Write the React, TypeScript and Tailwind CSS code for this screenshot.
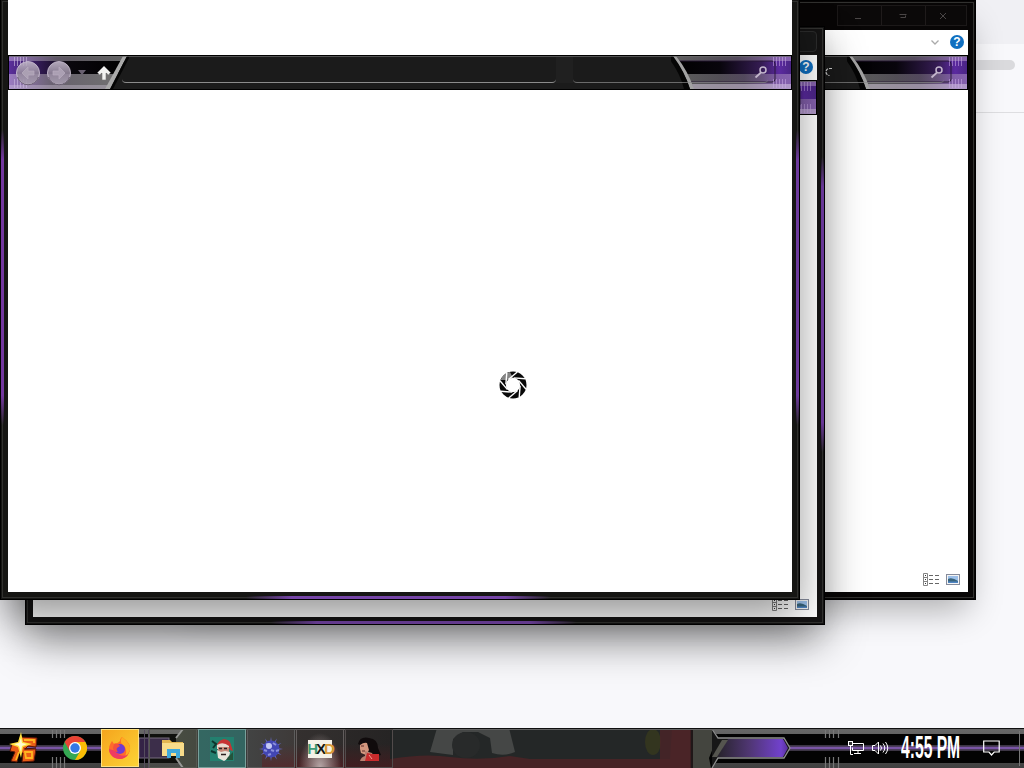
import React from "react";
import clsx from "clsx";

const HelpIcon = () => (
  <div className="mb-px flex size-3.5 shrink-0 items-center justify-center rounded-full bg-[#0f6fc0] font-['Liberation_Sans'] text-[12px] font-bold leading-none text-white">
    ?
  </div>
);

const NavButton = ({ flip = false }: { flip?: boolean }) => (
  <svg viewBox="0 0 26 26" className={clsx("size-[26px]", flip && "-scale-x-100")}>
    <defs>
      <linearGradient id="orb" x1="0" y1="0" x2="0" y2="1">
        <stop offset="0" stopColor="#c4bacb" />
        <stop offset="0.5" stopColor="#94889d" />
        <stop offset="1" stopColor="#a99fb2" />
      </linearGradient>
    </defs>
    <circle cx="13" cy="13" r="11.5" fill="url(#orb)" opacity="0.9" stroke="#cfc4d6" />
    <path d="M2.500 17a11 11 0 0 0 21 0" fill="none" stroke="#4b4054" opacity="0.7" />
    <path d="M13 7l-6 6 6 6v-4h6v-4h-6z" fill="#aba0b3" stroke="#b9aec0" strokeWidth="0.700" />
  </svg>
);

const ticks = [0, 3, 6, 9, 12];

// Left end of the navigation bar: purple glass cut by a silver slash
const BarLeft = () => (
  <svg viewBox="0 0 120 33" className="absolute left-0 top-0 h-[33px] w-[120px]">
    <defs>
      <linearGradient id="glassL" x1="0" x2="1">
        <stop offset="0" stopColor="#5b2f9c" />
        <stop offset="0.2" stopColor="#3a1f62" />
        <stop offset="0.5" stopColor="#0a070d" />
        <stop offset="1" stopColor="#000" />
      </linearGradient>
      <linearGradient id="shineL" x1="0" x2="1">
        <stop offset="0" stopColor="#a688c8" />
        <stop offset="0.4" stopColor="#77707c" />
        <stop offset="1" stopColor="#858585" />
      </linearGradient>
    </defs>
    <path d="M0 0H118L101 33H0z" fill="url(#glassL)" />
    <path d="M0 0H118L116 5H0z" fill="url(#shineL)" opacity="0.75" />
    <path d="M0 18H109L101 33H0z" fill="url(#shineL)" opacity="0.85" />
    <path d="M0 29H103L101 33H0z" fill="#ddd2e5" opacity="0.35" />
    {ticks.map((t) => (
      <path key={t} d={`M${5.5 + t} 1V10M${5.5 + t} 23V32`} stroke="#c9b6df" opacity="0.65" />
    ))}
    <path d="M114 0h4L101 33h-5z" fill="#aaa" />
    <path d="M118 0h3L104 33h-3z" fill="#050505" />
  </svg>
);

const BarRight = () => (
  <svg viewBox="0 0 120 33" className="absolute right-0 top-0 h-[33px] w-[120px]">
    <defs>
      <linearGradient id="glassR" x1="0" x2="1">
        <stop offset="0" stopColor="#000" />
        <stop offset="0.4" stopColor="#08050c" />
        <stop offset="0.75" stopColor="#351c53" />
        <stop offset="0.9" stopColor="#5b2aa0" />
        <stop offset="1" stopColor="#4a2584" />
      </linearGradient>
      <linearGradient id="shineR" x1="0" x2="1">
        <stop offset="0" stopColor="#898989" />
        <stop offset="0.55" stopColor="#6d6573" />
        <stop offset="1" stopColor="#a481c4" />
      </linearGradient>
    </defs>
    <path d="M2 0H120V33H22Q15 15 2 0z" fill="url(#glassR)" />
    <path d="M2 0H120V5H6z" fill="url(#shineR)" opacity="0.7" />
    <path d="M16 18H120V33H22z" fill="url(#shineR)" opacity="0.65" />
    <path d="M21 28H120V33H22z" fill="#ddd2e5" opacity="0.5" />
    <path d="M8 5H101q3 0 3 3V23q0 3-3 3H20" fill="none" stroke="#261633" opacity="0.9" />
    {ticks.map((t) => (
      <path key={t} d={`M${102.5 + t} 1V10M${102.5 + t} 23V32`} stroke="#c9a9e6" opacity="0.55" />
    ))}
    <path d="M1 0h4Q17 15 23 33h-4Q13 15 1 0z" fill="#a2a2a2" />
    <path d="M-4 0h6Q14 16 19 33h-6Q9 16-4 0z" fill="#050505" />
  </svg>
);

const SearchIcon = () => (
  <svg viewBox="0 0 14 14" className="size-3.5">
    <circle cx="9" cy="5" r="3" fill="none" stroke="#c3b6cc" strokeWidth="1.5" />
    <path d="M7 7.500L1.500 12.500" stroke="#c3b6cc" strokeWidth="1.8" />
  </svg>
);

const NavBar = ({ refresh = false }: { refresh?: boolean }) => (
  <div className="relative h-[35px] shrink-0 border border-black bg-[#1b1b1b]">
    <BarLeft />
    <BarRight />
    <div className="relative flex h-full items-center border-t border-[#6b6b6b]/70 pb-px pl-1.5 pr-[23px]">
      <NavButton />
      <div className="ml-[5px]">
        <NavButton flip />
      </div>
      <svg viewBox="0 0 8 5" className="ml-1.5 h-[5px] w-2">
        <path d="M0 0h8L4 5z" fill="#696070" />
      </svg>
      <svg viewBox="0 0 16 16" className="ml-2.5 size-4">
        <path d="M8 1L14.500 7.500 12.500 10 10 8V15H6V8L3.500 10 1.500 7.500z" fill="#f2f2f2" stroke="#777" strokeWidth="0.6" />
      </svg>
      <div className="ml-2.5 h-[26px] w-[434px] shrink-0 self-start rounded-b border-b border-[#8b8b8b]" />
      <div className="h-[26px] w-[17px] shrink-0 self-start bg-[#202020]" />
      <div className="flex h-[26px] flex-1 items-center self-start rounded-b border-b border-[#8b8b8b]/70 pt-[5px]">
        {refresh && (
          <svg viewBox="0 0 12 12" className="ml-[73px] size-3">
            <path d="M10 2.500H7.500a3.500 3.500 0 1 0 0 7" fill="none" stroke="#d8d8d8" strokeWidth="1.2" strokeDasharray="3 1" />
          </svg>
        )}
        <div className="ml-auto">
          <SearchIcon />
        </div>
      </div>
    </div>
  </div>
);

// View switcher in the lower right corner
const StatusIcons = () => (
  <div className="mt-auto flex items-center justify-end gap-[7px] pb-1.5 pr-2">
    <svg viewBox="0 0 16 13" className="h-[13px] w-4" fill="none">
      <path d="M.5.5h4v12h-4zM.5 4.500h4M.5 8.500h4" stroke="#858585" />
      <path d="M2 2.500h1M2 6.500h1M2 10.500h1" stroke="#333" />
      <path d="M6 2.500h4M12 2.500h4M6 6.500h4M12 6.500h4M6 10.500h4M12 10.500h4" stroke="#666" />
    </svg>
    <svg viewBox="0 0 14 11" className="h-[11px] w-3.5">
      <rect x=".5" y=".5" width="13" height="10" fill="#f4f4f4" stroke="#858b9b" />
      <rect x="2" y="2" width="10" height="7" fill="#9cc0ea" />
      <path d="M2 5q4-2 10 2v1H2z" fill="#38637a" />
      <path d="M2 7.500h10V9H2z" fill="#4f85c4" />
    </svg>
  </div>
);

const CaptionButtons = () => (
  <div className="mr-px flex h-[21px] w-[130px] border border-[#1c1919] bg-[#0b0909] text-[#4a4646]">
    <div className="flex flex-1 items-center justify-center border-r border-[#1f1b1b]">
      <svg viewBox="0 0 8 8" className="mr-1 size-2" stroke="currentColor">
        <path d="M1 6.500h6" />
      </svg>
    </div>
    <div className="flex flex-1 items-center justify-center border-r border-[#1f1b1b]">
      <svg viewBox="0 0 8 8" className="mr-0.5 size-2" stroke="currentColor" fill="none">
        <path d="M.5 2.500h7M1.500 5.500h5v-2" />
      </svg>
    </div>
    <div className="flex w-10 items-center justify-center">
      <svg viewBox="0 0 8 8" className="mr-1.5 size-2" stroke="currentColor">
        <path d="M1 1l6 6M7 1L1 7" />
      </svg>
    </div>
  </div>
);

type WindowProps = {
  className: string;
  glow?: boolean;
  children: React.ReactNode;
};

const Window = ({ className, glow = true, children }: WindowProps) => (
  <div className={clsx("absolute isolate w-[800px] border border-black px-[7px] pb-[7px]", className)}>
    <div className="pointer-events-none absolute inset-px border border-[#31312f]" />
    {glow && (
      <>
        <div className="absolute left-0 top-[130px] h-[295px] w-[3px] bg-[linear-gradient(to_bottom,transparent,#73379f_10%,#73379f_90%,transparent)]" />
        <div className="absolute right-0 top-[130px] h-[295px] w-[3px] bg-[linear-gradient(to_bottom,transparent,#6d3a9e_10%,#6d3a9e_90%,transparent)]" />
        <div className="absolute bottom-0 left-[245px] h-[3px] w-[305px] bg-[linear-gradient(to_right,transparent,#7645a8_15%,#7645a8_85%,transparent)]" />
      </>
    )}
    <div className="relative flex h-full flex-col">{children}</div>
  </div>
);

const Shutter = () => (
  <svg viewBox="-14 -14 28 28" className="absolute left-[499px] top-[371px] size-7">
    <circle r="10.2" fill="none" stroke="#090909" strokeWidth="6.6" />
    <path d="M-12.500-5A13.500 13.500 0 0 1-3-13L0-7-6-5z" fill="#858585" />
    {[0, 45, 90, 135, 180, 225, 270, 315].map((a) => (
      <path key={a} d="M-3-6.500L7.500-11.500" stroke="#fff" strokeWidth="1.4" transform={`rotate(${a + 75})`} />
    ))}
    <circle r="7" fill="#fff" />
  </svg>
);

// Glass, rails and blurred wallpaper behind the taskbar items
const TaskbarBackdrop = () => (
  <svg viewBox="0 0 1024 40" className="absolute inset-0 h-10 w-full">
    <defs>
      <linearGradient id="rail" x1="0" y1="0" x2="0" y2="1">
        <stop offset="0" stopColor="#686868" />
        <stop offset="1" stopColor="#404040" />
      </linearGradient>
      <linearGradient id="pill" x1="0" x2="1">
        <stop offset="0" stopColor="#26232a" />
        <stop offset="0.45" stopColor="#4f3672" />
        <stop offset="0.9" stopColor="#7141cc" />
        <stop offset="1" stopColor="#57309c" />
      </linearGradient>
      <linearGradient id="tiles" x1="0" x2="1">
        <stop offset="0" stopColor="#41443c" />
        <stop offset="0.3" stopColor="#393b3b" />
        <stop offset="0.55" stopColor="#34302f" />
        <stop offset="1" stopColor="#2b2929" />
      </linearGradient>
      <linearGradient id="wine" x1="0" y1="0" x2="0" y2="1">
        <stop offset="0.4" stopColor="#4a2023" stopOpacity="0" />
        <stop offset="1" stopColor="#4a2023" />
      </linearGradient>
    </defs>
    <rect width="1024" height="40" fill="#030303" />
    <path d="M0 1H183L179 6H0zM0 35H179L183 40H0z" fill="url(#rail)" />
    <path d="M712 1H1024V6H716zM716 35H1024V40H712z" fill="url(#rail)" />
    <path d="M0 17h180v6H0zM788 17h236v6H788z" fill="#3c3544" />
    <path d="M0 20h180M788 20h236" stroke="#7955a5" strokeWidth="2.5" />
    {[52.5, 56.5, 60.5, 64.5, 825.5, 829.5, 833.5, 838.5].map((x) => (
      <path key={x} d={`M${x} 0V10M${x} 29V40`} stroke="#777" strokeWidth="1.2" />
    ))}
    <rect x="139" y="10" width="30" height="20" fill="#342346" stroke="#746a7e" />
    <path d="M144.500 0V40M148.500 0V40" stroke="#554d5d" />
    <path d="M183 0L176 10V30L183 40H390V0z" fill="url(#tiles)" />
    <path d="M183 1L176 10M176 30L183 40" stroke="#999" strokeWidth="2" />
    <path d="M262 0H390V40H262z" fill="url(#wine)" />
    <rect x="390" width="300" height="40" fill="#242727" />
    <path d="M390 31Q425 25 450 29Q480 33 510 28L530 31H670L672 0H690V40H390z" fill="#462426" />
    <path d="M437 0H509L515 24Q504 29 492 25L490 10 478 4H463L453 11V27L430 24z" fill="#454746" />
    <ellipse cx="466" cy="17" rx="14" ry="13" fill="#282a2a" />
    <ellipse cx="653" cy="14" rx="8" ry="13" fill="#33351f" />
    <path d="M660 0H692V40H660z" fill="#4b2428" opacity="0.8" />
    <path d="M692 0H711L717 10 709 30 711 40H692z" fill="#44453f" />
    <path d="M692 0v40" stroke="#201718" strokeWidth="2" />
    <path d="M712 1L718 10H784L790 20 784 30H718L712 40" fill="#171717" stroke="#8e8e8e" strokeWidth="1.3" />
    <path d="M728 11H783L788 20 783 29H717z" fill="url(#pill)" />
    <path d="M717 29L728 12 722 12 712 29z" fill="#55554f" />
    <path d="M0 .5H1024" stroke="#101010" />
    <path d="M0 1.500H1024" stroke="#646464" />
    <path d="M1019.500 3V38" stroke="#777" />
  </svg>
);

const StartIcon = () => (
  <svg viewBox="0 0 30 32" className="h-8 w-[30px]">
    <path
      d="M11 5l17 1-1 9-8-1-3 3 11 0-2 12-12 1 1-9-4 0-2 9-6-1 4-9-5-1 2-7 7-1z"
      fill="#e95d16"
      stroke="#5b1507"
    />
    <path d="M15 8h10v3M16 20h7v6h-6zM10 20l-3 8" fill="none" stroke="#ffb620" strokeWidth="1.8" />
    <path d="M15 17l12-1" stroke="#481207" strokeWidth="1.2" />
    <path d="M12 0l2 10 9 2-9 3-2 11-3-11-9-3 9-2z" fill="#ffe23f" />
    <path d="M12 6l1 5 5 1-5 2-1 6-2-6-5-2 5-1z" fill="#fffbd0" />
  </svg>
);

const ChromeIcon = () => (
  <svg viewBox="-12 -12 24 24" className="size-6">
    <circle r="12" fill="#35a853" />
    <path d="M-10.400-6A12 12 0 0 1 10.400-6H0L-5.200 3z" fill="#ea4335" />
    <path d="M10.400-6A12 12 0 0 1 0 12L5.200 3 0-6z" fill="#fbbc05" />
    <circle r="6" fill="#fff" />
    <circle r="4.7" fill="#3478e5" />
  </svg>
);

const FirefoxIcon = () => (
  <svg viewBox="0 0 24 24" className="size-6">
    <path d="M14 1c4 3 9 7 8 13-1 5-5 9-10 9S1 19 1 13c0-4 2-6 3-8l2 3c3-1 4-1 6-3 0-2 1-3 2-4z" fill="#ff6a2b" />
    <path d="M14 1c5 4 9 8 8 13-1 3-3 5-5 6 3-5 0-10-3-12-2-2-1-5 0-7z" fill="#ffad21" />
    <path d="M1 13c0 6 5 10 11 10 3 0 6-2 8-4-5 2-10 0-12-4z" fill="#ef3b61" />
    <circle cx="12" cy="13" r="5" fill="#713bd1" />
    <path d="M6 8c2-1 5 0 6 2l-3 2c-1 1 0 3 1 4-3 0-5-2-5-4z" fill="#f4503e" />
  </svg>
);

const FolderIcon = () => (
  <svg viewBox="0 0 24 22" className="h-[22px] w-6">
    <path d="M1 2h8l2 2h11v14H1z" fill="#e3b752" />
    <path d="M1 5h22v13H1z" fill="#f8dc8a" />
    <path d="M6 11h13v9h-4v-5h-5v5H6z" fill="#40a9dc" />
  </svg>
);

const SantaIcon = () => (
  <svg viewBox="0 0 24 24" className="size-6">
    <rect width="24" height="24" fill="#23806f" />
    <path d="M2 4l4 3-3 4M1 14l5 2" stroke="#0c352d" strokeWidth="2" fill="none" />
    <path d="M7 8c2-6 9-8 13-3l3 9-3-1-2-5z" fill="#c73333" />
    <path d="M7 8q6-4 12 1v3H7z" fill="#e8d9cf" />
    <path d="M8 10h11v7H8z" fill="#c98978" />
    <path d="M7 13l4 2 4-1 5 1-1 6-5 3-6-3z" fill="#e8e4da" />
    <path d="M9 11.500h3M14 11.500h3M11 17.500h5" stroke="#2a2020" strokeWidth="1.3" />
    <path d="M18 20l5-5v8h-7z" fill="#24543c" />
  </svg>
);

const BurstIcon = () => (
  <svg viewBox="-12 -12 24 24" className="size-6">
    {[0, 30, 60, 90, 120, 150].map((a) => (
      <path key={a} d="M-2 0L0-12 2 0 0 12z" fill="#6667c4" transform={`rotate(${a})`} />
    ))}
    <circle r="8.5" fill="#4246b4" />
    <path d="M-5-5l3 1M2-6l3 2M-7 1l3 1M0 1l3 1M5 2l3-1M-3 6l3-1" stroke="#8b90dc" strokeWidth="2" />
    <circle cx="-2" cy="-3" r="3" fill="#c4c9f5" />
  </svg>
);

const HxDIcon = () => (
  <div className="flex h-[18px] w-6 items-center justify-center bg-[#f4f1e8] font-['Liberation_Sans'] text-[15px] font-bold leading-none tracking-[-2px]">
    <span className="text-[#3d9b77]">H</span>
    <span className="text-[#151515]">X</span>
    <span className="text-[#d99a39]">D</span>
  </div>
);

const PortraitIcon = () => (
  <svg viewBox="0 0 24 24" className="size-6">
    <path d="M1 7Q3-1 12 1q9 1 9 10l3 7-8 2-7-9z" fill="#100b0c" />
    <path d="M3 8q4-3 7-2l2 7-3 5-5-2-1-4z" fill="#d3977e" />
    <path d="M8 14l7 2 4 8H3q1-4 5-5z" fill="#b88070" />
    <path d="M10 16l5 1 7 0v7H8z" fill="#c82b2c" />
    <path d="M4 9h3M5 14h3" stroke="#612e2a" />
    <path d="M12 18l3 4" stroke="#f1a094" />
  </svg>
);

const tasks = [
  { name: "explorer", icon: <FolderIcon />, tile: "border-[#555850] bg-[#8b9074]/10" },
  { name: "santa", icon: <SantaIcon />, tile: "border-[#78a09b] bg-[#32716c]/80" },
  { name: "burst", icon: <BurstIcon />, tile: "border-[#5d5d5d] bg-white/5" },
  { name: "hxd", icon: <HxDIcon />, tile: "border-[#625d5d] bg-[radial-gradient(ellipse_at_bottom,#b5a6a6,transparent_65%)]" },
  { name: "portrait", icon: <PortraitIcon />, tile: "border-[#514b4b] bg-black/10" },
];

const Taskbar = () => (
  <div className="relative h-10 shrink-0">
    <TaskbarBackdrop />
    <div className="relative flex h-full items-center">
      <div className="flex w-[50px] justify-center pr-0.5">
        <StartIcon />
      </div>
      <div className="flex w-[51px] justify-center pr-0.5">
        <ChromeIcon />
      </div>
      <div className="flex h-[38px] w-[38px] items-center justify-center border border-[#ffe280] bg-linear-to-br from-[#f5a51d] to-[#fbd335]">
        <FirefoxIcon />
      </div>
      <div className="ml-2.5 flex h-full">
        {tasks.map((task) => (
          <div key={task.name} className="flex w-[49px] pt-px">
            <div className={clsx("flex h-[39px] w-12 items-center justify-center border", task.tile)}>
              {task.icon}
            </div>
          </div>
        ))}
      </div>
      <div className="ml-auto flex items-center pr-6 text-white">
        <svg viewBox="0 0 16 14" className="h-3.5 w-4" fill="none" stroke="#fff">
          <path d="M5 2.500h10.500v7H4.500v-3M10 9.500v3M6 12.500h7M2.500 4v9.500H5" />
          <rect x=".5" y=".5" width="4" height="4" fill="#333" />
        </svg>
        <svg viewBox="0 0 17 14" className="ml-2 h-3.5 w-[17px]" fill="none" stroke="#fff">
          <path d="M.5 4.500h2.500L6.500 1v12L3 9.500H.5zM8.500 4.500q2 2.500 0 5M11 2.500q3.500 4.500 0 9M13.500 1q4.500 6 0 12" />
        </svg>
        <div className="ml-3 h-10 w-[60px]">
          <span className="block w-max origin-left scale-x-[0.505] font-['Liberation_Sans'] text-[31px] font-bold leading-10">
            4:55 PM
          </span>
        </div>
        <svg viewBox="0 0 17 16" className="ml-[22px] h-4 w-[17px]" fill="none" stroke="#fff" strokeWidth="1.2">
          <path d="M.7 1h15.500v11h-5L8.500 15 6 12H.7z" />
        </svg>
      </div>
    </div>
  </div>
);

export default function App() {
  return (
    <div className="flex h-[768px] w-[1024px] flex-col overflow-hidden bg-[#f8f8fb] font-['Liberation_Sans',sans-serif]">
      <div className="relative flex-1 overflow-hidden">
        <div className="flex flex-col">
          <div className="h-11 bg-[#f0f0f4]" />
          <div className="flex h-[69px] justify-end border-b border-[#dedee1] pr-[9px] pt-4">
            <div className="h-2.5 w-[60px] rounded-full bg-[#dadadd]" />
          </div>
        </div>

        <Window
          glow={false}
          className="left-[176px] top-0 h-[600px] bg-[#080606] shadow-[0_18px_32px_-8px_rgba(0,0,0,0.3)]"
        >
          <div className="flex h-[29px] shrink-0 items-center justify-end">
            <CaptionButtons />
          </div>
          <div className="flex flex-1 flex-col bg-white">
            <div className="flex h-[25px] shrink-0 items-center justify-end gap-[11px] pr-1">
              <svg viewBox="0 0 8 5" className="h-[5px] w-2" fill="none" stroke="#aaa" strokeWidth="1.3">
                <path d="M.5.5L4 4 7.500.5" />
              </svg>
              <HelpIcon />
            </div>
            <NavBar refresh />
            <StatusIcons />
          </div>
        </Window>

        <Window className="left-[25px] top-[26px] h-[599px] bg-[#141313] shadow-[0_18px_40px_-2px_rgba(0,0,0,0.42)]">
          <div className="flex h-7 shrink-0 items-center justify-end">
            <div className="h-[21px] w-[132px] rounded border border-[#2c2c2c] bg-[#181818]" />
          </div>
          <div className="flex flex-1 flex-col bg-white">
            <div className="flex h-[25px] shrink-0 items-center justify-end pr-1">
              <HelpIcon />
            </div>
            <NavBar />
            <StatusIcons />
          </div>
        </Window>

        <Window className="left-0 top-0 h-[600px] border-t-0 bg-[#161614] shadow-[0_18px_40px_-2px_rgba(0,0,0,0.42)]">
          <div className="flex flex-1 flex-col bg-white">
            <div className="h-[55px] shrink-0" />
            <NavBar />
          </div>
        </Window>
        <Shutter />
      </div>
      <Taskbar />
    </div>
  );
}
